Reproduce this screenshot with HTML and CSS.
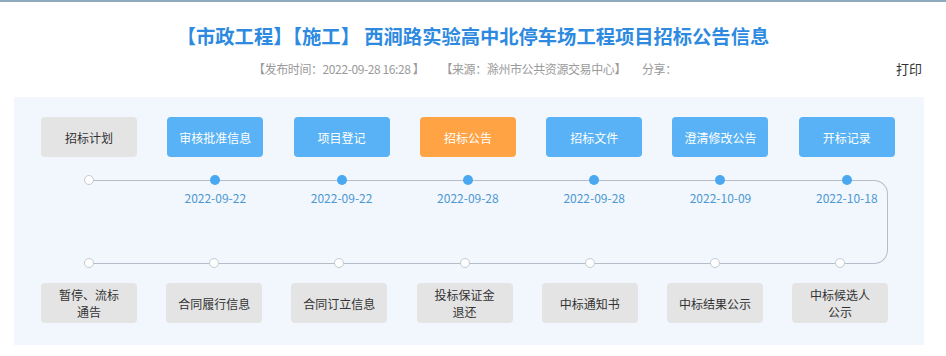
FILE: index.html
```html
<!DOCTYPE html>
<html lang="zh-CN">
<head>
  <meta charset="UTF-8">
  <meta name="viewport" content="width=device-width, initial-scale=1.0">
  <title>招标公告信息</title>
  <link rel="stylesheet" href="styles.css">
</head>
<body>
  <div class="title">【市政工程】【施工】 西涧路实验高中北停车场工程项目招标公告信息</div>
  <div class="meta">
    <span class="meta-item">【发布时间：2022-09-28 16:28 】</span>
    <span class="meta-item">【来源：滁州市公共资源交易中心】</span>
    <span class="meta-item share">分享：</span>
    <span class="print">打印</span>
  </div>

  <!-- Process flow -->
  <div class="panel">
    <div class="track"></div>

    <div class="row-top">
      <div class="step">
        <div class="btn gray">招标计划</div>
        <div class="dot empty"></div>
        <div class="date"></div>
      </div>
      <div class="step">
        <div class="btn blue">审核批准信息</div>
        <div class="dot"></div>
        <div class="date">2022-09-22</div>
      </div>
      <div class="step">
        <div class="btn blue">项目登记</div>
        <div class="dot"></div>
        <div class="date">2022-09-22</div>
      </div>
      <div class="step">
        <div class="btn orange">招标公告</div>
        <div class="dot"></div>
        <div class="date">2022-09-28</div>
      </div>
      <div class="step">
        <div class="btn blue">招标文件</div>
        <div class="dot"></div>
        <div class="date">2022-09-28</div>
      </div>
      <div class="step">
        <div class="btn blue">澄清修改公告</div>
        <div class="dot"></div>
        <div class="date">2022-10-09</div>
      </div>
      <div class="step">
        <div class="btn blue">开标记录</div>
        <div class="dot"></div>
        <div class="date">2022-10-18</div>
      </div>
    </div>

    <div class="row-bottom">
      <div class="step">
        <div class="dot empty"></div>
        <div class="btn gray">暂停、流标<br>通告</div>
      </div>
      <div class="step">
        <div class="dot empty"></div>
        <div class="btn gray">合同履行信息</div>
      </div>
      <div class="step">
        <div class="dot empty"></div>
        <div class="btn gray">合同订立信息</div>
      </div>
      <div class="step">
        <div class="dot empty"></div>
        <div class="btn gray">投标保证金<br>退还</div>
      </div>
      <div class="step">
        <div class="dot empty"></div>
        <div class="btn gray">中标通知书</div>
      </div>
      <div class="step">
        <div class="dot empty"></div>
        <div class="btn gray">中标结果公示</div>
      </div>
      <div class="step">
        <div class="dot empty"></div>
        <div class="btn gray">中标候选人<br>公示</div>
      </div>
    </div>
  </div>
</body>
</html>
```

FILE: styles.css
```css
body {
  margin: 0;
  font-family: "Noto Sans CJK SC", "Liberation Sans", sans-serif;
  background-color: #fff;
  border-top: 2px solid #8fa9bc;
}
.title {
  margin-top: 20px;
  text-align: center;
  font-size: 19.3px;
  line-height: 28px;
  font-weight: bold;
  color: #2d8ae0;
}
.meta {
  display: flex;
  align-items: center;
  margin-top: 11px;
  padding-left: 253px;
  font-size: 12px;
  line-height: 16px;
  color: #9a9a9a;
}
.meta-item {
  margin-right: 16px;
  letter-spacing: -0.4px;
}
.print {
  margin-left: auto;
  margin-right: 24px;
  font-size: 13px;
  color: #333;
}
.panel {
  position: relative;
  margin: 20px 22px 0 14px;
  padding: 20px 0 22px 27px;
  background-color: #f1f7fd;
}
/* the line that joins the dots, drawn under them */
.track {
  position: absolute;
  left: 74px;
  top: 83px;
  width: 799px;
  height: 82px;
  border: 1px solid #b5bec8;
  border-left: none;
  border-radius: 0 14px 14px 0;
}
.row-top {
  display: flex;
  gap: 30.3px;
}
.row-bottom {
  display: flex;
  gap: 29.2px;
  margin-top: 52px;
}
.step {
  position: relative;
  display: flex;
  flex-direction: column;
  align-items: center;
  width: 96px;
}
.btn {
  display: flex;
  align-items: center;
  justify-content: center;
  width: 96px;
  height: 40px;
  border-radius: 4px;
  font-size: 12px;
  line-height: 17px;
  text-align: center;
  box-sizing: border-box;
}
.blue {
  background-color: #58b2f5;
  color: #fff;
}
.orange {
  background-color: #ffa345;
  color: #fff;
}
.gray {
  background-color: #e4e4e4;
  color: #333;
}
.row-top .dot {
  margin-top: 18px;
}
.row-bottom .btn {
  margin-top: 15px;
}
.dot {
  width: 10px;
  height: 10px;
  border-radius: 50%;
  background-color: #4aa8f0;
  box-sizing: border-box;
}
.dot.empty {
  background-color: #fff;
  border: 1px solid #c3cad1;
}
.date {
  height: 16px;
  margin-top: 5px;
  font-size: 12px;
  line-height: 16px;
  color: #4d97d2;
}
```
